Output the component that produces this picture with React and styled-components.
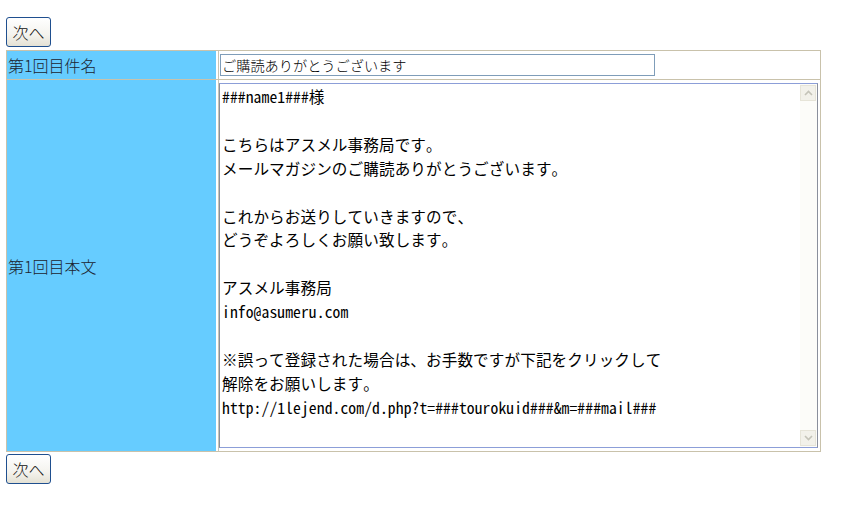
import React from "react";
import styled, { createGlobalStyle } from "styled-components";

const GlobalStyle = createGlobalStyle`
  body {
    margin: 0;
    background: #ffffff;
    font-family: "Noto Sans CJK JP", "Noto Sans", sans-serif;
  }
`;

const Page = styled.div`
  padding: 17px 0 0 6px;
  display: flex;
  flex-direction: column;
  align-items: flex-start;
`;

const NextButton = styled.button`
  height: 30px;
  width: 45px;
  padding: 0;
  border: 1px solid #1f4f8f;
  border-radius: 3px;
  background: linear-gradient(#ffffff, #f4f3ee 60%, #e4e1d4);
  font-family: "Noto Sans CJK JP", sans-serif;
  font-weight: 300;
  font-size: 16px;
  color: #111;
  margin-bottom: ${(p) => p.$gap || 0}px;
`;

const Table = styled.div`
  width: 813px;
  border: 1px solid #c9c2ab;
  display: flex;
  flex-direction: column;
  margin-bottom: 2px;
`;

const Row = styled.div`
  display: grid;
  grid-template-columns: 209px 1fr;
  column-gap: 2px;
  height: ${(p) => p.$height}px;
  border-bottom: ${(p) => (p.$last ? "none" : "1px solid #c9c2ab")};
`;

const Label = styled.div`
  background: #66ccff;
  display: flex;
  align-items: center;
  padding-left: 1px;
  font-size: 16px;
  font-weight: 300;
  color: #1c2430;
`;

const Cell = styled.div`
  display: flex;
  align-items: center;
  border-left: 1px solid #c9c4b4;
  padding-left: ${(p) => p.$pad}px;
`;

const TitleInput = styled.input`
  box-sizing: border-box;
  width: 435px;
  height: 22px;
  border: 1px solid #7f9db9;
  padding: 0 1px;
  font-family: "Noto Sans CJK JP", sans-serif;
  font-weight: 300;
  font-size: 14.2px;
  color: #000;
  outline: none;
`;

const AreaBox = styled.div`
  box-sizing: border-box;
  width: 599px;
  height: 365px;
  display: flex;
  border: 1px solid #8a8f9c;
  border-top-color: #8c9ed8;
  border-bottom-color: #8c9ed8;
`;

const BodyText = styled.textarea`
  flex: 1;
  border: none;
  resize: none;
  outline: none;
  overflow: hidden;
  padding: 1px 2px;
  margin: 0;
  font-family: "Noto Sans Mono CJK JP", "Noto Sans CJK JP", monospace;
  font-weight: 300;
  font-size: 15.6px;
  letter-spacing: 0.1px;
  line-height: 23.9px;
  color: #000;
`;

const ScrollTrack = styled.div`
  width: 16px;
  background: #fcfcf9;
  display: flex;
  flex-direction: column;
  justify-content: space-between;
  padding: 1px 1px 1px 0;
`;

const ScrollButton = styled.div`
  height: 16px;
  background: #f2f1ea;
  border: 1px solid #e6e4d8;
  box-sizing: border-box;
  display: flex;
  align-items: center;
  justify-content: center;
`;

const Chevron = ({ down }) => (
  <svg width="9" height="6" viewBox="0 0 9 6">
    <path
      d={down ? "M1 1 L4.5 4.5 L8 1" : "M1 5 L4.5 1.5 L8 5"}
      fill="none"
      stroke="#c4c3b8"
      strokeWidth="1.6"
    />
  </svg>
);

const body = `###name1###様

こちらはアスメル事務局です。
メールマガジンのご購読ありがとうございます。

これからお送りしていきますので、
どうぞよろしくお願い致します。

アスメル事務局
info@asumeru.com

※誤って登録された場合は、お手数ですが下記をクリックして
解除をお願いします。
http://1lejend.com/d.php?t=###tourokuid###&m=###mail###`;

const App = () => {
  return (
    <Page>
      <GlobalStyle />
      <NextButton $gap={3}>次へ</NextButton>
      <Table>
        <Row $height={28}>
          <Label>第1回目件名</Label>
          <Cell $pad={1}>
            <TitleInput readOnly defaultValue="ご購読ありがとうございます" />
          </Cell>
        </Row>
        <Row $height={371} $last>
          <Label>第1回目本文</Label>
          <Cell $pad={0}>
            <AreaBox>
              <BodyText readOnly defaultValue={body} />
              <ScrollTrack>
                <ScrollButton>
                  <Chevron />
                </ScrollButton>
                <ScrollButton>
                  <Chevron down />
                </ScrollButton>
              </ScrollTrack>
            </AreaBox>
          </Cell>
        </Row>
      </Table>
      <NextButton>次へ</NextButton>
    </Page>
  );
};

export default App;
